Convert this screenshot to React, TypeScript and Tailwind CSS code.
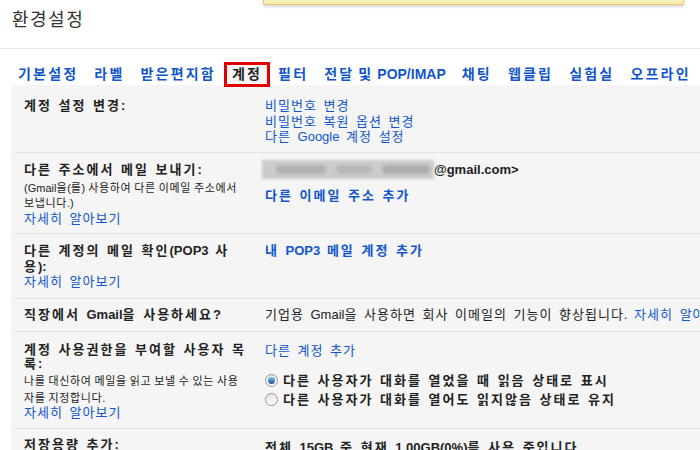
import React from 'react';

const tabs = ['기본설정', '라벨', '받은편지함', '계정', '필터', '전달 및 POP/IMAP', '채팅', '웹클립', '실험실', '오프라인'];

// Hangul runs get extra tracking so they take the width of the Dotum glyphs in the screenshot
function K({ t, k }: { t: string; k: string }) {
  const parts = t.split(/([\uAC00-\uD7A3]+)/);
  return (
    <>
      {parts.map((p, i) =>
        /[\uAC00-\uD7A3]/.test(p) ? (
          <span key={i} className={k}>
            {p}
          </span>
        ) : (
          p
        )
      )}
    </>
  );
}

const N = 'tracking-[1px]';
const B = 'tracking-[2px]';
const S = 'tracking-[0.6px]';

function Radio({ checked }: { checked?: boolean }) {
  return (
    <span className="inline-flex w-[13px] h-[13px] rounded-full border border-[#9a9a9a] bg-gradient-to-b from-[#e4e4e4] to-[#ffffff] items-center justify-center mr-[5px] shrink-0">
      {checked && <span className="w-[7px] h-[7px] rounded-full bg-gradient-to-b from-[#7cc0f0] to-[#15579a]" />}
    </span>
  );
}

function Row({ label, children, className = '' }: { label: React.ReactNode; children: React.ReactNode; className?: string }) {
  return (
    <div className={`ml-[4px] border-b border-[#e2e2e2] flex pl-[9px] ${className}`}>
      <div className="w-[241px] shrink-0 pr-[17px] break-all">{label}</div>
      <div className="flex-1 whitespace-nowrap">{children}</div>
    </div>
  );
}

export default function App() {
  const link = 'text-[#1155cc]';
  return (
    <div
      className="w-[700px] h-[450px] overflow-hidden bg-white relative text-[13px] text-[#222] [word-spacing:3px]"
      style={{ fontFamily: '"Liberation Sans", "Noto Sans CJK KR", sans-serif' }}
    >
      {/* notification bar */}
      <div className="absolute left-[263px] top-[-6px] w-[421px] h-[11px] bg-[#fcefb6] border border-[#f0c36d] rounded-[2px] shadow-[0_2px_3px_rgba(0,0,0,0.15)]" />

      {/* Header */}
      <div className="h-[49px] border-b border-[#e5e5e5] pl-[12px] pt-[6px]">
        <span className="text-[18px] leading-[28px] text-[#333] tracking-[1.5px]">환경설정</span>
      </div>

      {/* Tabs */}
      <div className="relative z-10 flex pl-[10px] pt-[13px] [word-spacing:0px]">
        {tabs.map((t) => (
          <div
            key={t}
            className={`h-[25px] px-[5px] border-[3px] flex items-center text-[14px] font-bold ${
              t === '계정' ? 'border-[#e00000] bg-[#f5f5f5] text-[#222]' : 'border-transparent text-[#1155cc]'
            }`}
          >
            <span>
              <K t={t} k="tracking-[2.2px]" />
            </span>
          </div>
        ))}
      </div>

      {/* Panel */}
      <div className="ml-[11px] mt-[-2px] bg-[#f5f5f5] h-[400px] leading-[15.5px]">
        <Row label={<div className="font-bold pt-[1px]"><K t="계정 설정 변경:" k={B} /></div>} className="pt-[12px] h-[68px]">
          <div className="pt-[1px]">
            <div className={link}><K t="비밀번호 변경" k={N} /></div>
            <div className={link}><K t="비밀번호 복원 옵션 변경" k={N} /></div>
            <div className={link}><K t="다른 Google 계정 설정" k={N} /></div>
          </div>
        </Row>

        <Row
          label={
            <div>
              <div className="font-bold"><K t="다른 주소에서 메일 보내기:" k={B} /></div>
              <div className="text-[11px] leading-[15px] mt-[3px] [word-spacing:0px] whitespace-nowrap">
                <div><K t="(Gmail을(를) 사용하여 다른 이메일 주소에서" k={S} /></div>
                <div><K t="보냅니다.)" k={S} /></div>
              </div>
              <div className={link}><K t="자세히 알아보기" k={N} /></div>
            </div>
          }
          className="pt-[9px] h-[81px]"
        >
          <div className="flex items-center font-bold mt-[-2px] [word-spacing:0px]">
            <span className="relative w-[172px] h-[19px] bg-[#cbcbcb] blur-[1.5px] ml-[-3px] overflow-hidden">
              <span className="absolute left-[14px] top-[5px] w-[50px] h-[9px] bg-[#b2b2b2] rounded-full" />
              <span className="absolute left-[74px] top-[5px] w-[36px] h-[9px] bg-[#b8b8b8] rounded-full" />
              <span className="absolute left-[120px] top-[5px] w-[48px] h-[9px] bg-[#adadad] rounded-full" />
            </span>
            <span>@gmail.com&gt;</span>
          </div>
          <div className={`${link} font-bold mt-[9px]`}><K t="다른 이메일 주소 추가" k={B} /></div>
        </Row>

        <Row
          label={
            <div>
              <div className="font-bold"><K t="다른 계정의 메일 확인(POP3 사용):" k={B} /></div>
              <div className={link}><K t="자세히 알아보기" k={N} /></div>
            </div>
          }
          className="pt-[9px] h-[65px]"
        >
          <div className={`${link} font-bold`}><K t="내 POP3 메일 계정 추가" k={B} /></div>
        </Row>

        <Row label={<div className="font-bold"><K t="직장에서 Gmail을 사용하세요?" k={B} /></div>} className="pt-[8px] h-[33px]">
          <div>
            <K t="기업용 Gmail을 사용하면 회사 이메일의 기능이 향상됩니다." k={N} />{' '}
            <span className={link}><K t="자세히 알아보기" k={N} /></span>
          </div>
        </Row>

        <Row
          label={
            <div>
              <div className="font-bold leading-[14px]"><K t="계정 사용권한을 부여할 사용자 목록:" k={B} /></div>
              <div className="text-[11px] leading-[17px] mt-[2px] [word-spacing:0px] whitespace-nowrap">
                <div><K t="나를 대신하여 메일을 읽고 보낼 수 있는 사용" k={S} /></div>
                <div><K t="자를 지정합니다." k={S} /></div>
              </div>
              <div className={`${link} mt-[-2px]`}><K t="자세히 알아보기" k={N} /></div>
            </div>
          }
          className="pt-[11px] h-[97px]"
        >
          <div className={link}><K t="다른 계정 추가" k={N} /></div>
          <div className="mt-[12px] font-bold leading-[19px]">
            <div className="flex items-center">
              <Radio checked />
              <span><K t="다른 사용자가 대화를 열었을 때 읽음 상태로 표시" k={B} /></span>
            </div>
            <div className="flex items-center">
              <Radio />
              <span><K t="다른 사용자가 대화를 열어도 읽지않음 상태로 유지" k={B} /></span>
            </div>
          </div>
        </Row>

        <Row label={<div className="font-bold"><K t="저장용량 추가:" k={B} /></div>} className="pt-[8px] h-[40px] border-b-0">
          <div className="font-bold mt-[3px]"><K t="전체 15GB 중 현재 1.00GB(0%)를 사용 중입니다." k={B} /></div>
        </Row>
      </div>
    </div>
  );
}
